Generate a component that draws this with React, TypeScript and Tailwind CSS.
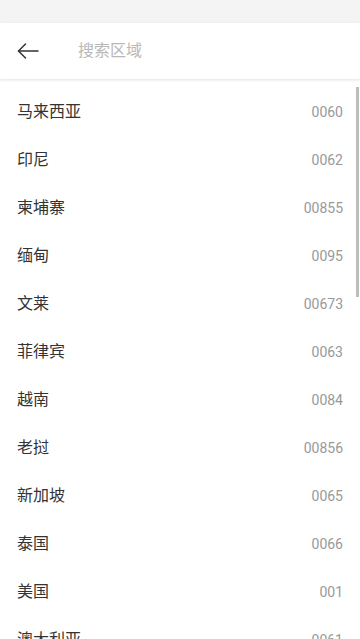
import React from 'react';

const regions = [
  { name: '马来西亚', code: '0060' },
  { name: '印尼', code: '0062' },
  { name: '柬埔寨', code: '00855' },
  { name: '缅甸', code: '0095' },
  { name: '文莱', code: '00673' },
  { name: '菲律宾', code: '0063' },
  { name: '越南', code: '0084' },
  { name: '老挝', code: '00856' },
  { name: '新加坡', code: '0065' },
  { name: '泰国', code: '0066' },
  { name: '美国', code: '001' },
  { name: '澳大利亚', code: '0061' },
];

export default function App() {
  return (
    <div
      className="relative w-[360px] h-[639px] overflow-hidden bg-white"
      style={{ fontFamily: 'Roboto, "Noto Sans CJK SC", sans-serif' }}
    >
      <div className="h-[23px] bg-[#f4f4f4]" />
      <header className="relative z-10 flex items-center h-[56px] bg-white shadow-[0_1px_3px_rgba(0,0,0,0.12)]">
        <button className="w-[56px] h-full flex items-center justify-center">
          <svg width="24" height="24" viewBox="0 0 24 24" fill="none" stroke="#333" strokeWidth="1.5" strokeLinecap="round" strokeLinejoin="round">
            <path d="M22 12H2.5" />
            <path d="M9.5 5L2.5 12L9.5 19" />
          </svg>
        </button>
        <span className="ml-[22px] text-[16px] text-[#b8b8b8]">搜索区域</span>
      </header>
      <ul className="pt-[9px]">
        {regions.map((r) => (
          <li key={r.name} className="flex items-center justify-between h-[48px] pl-[17px] pr-[17px]">
            <span className="text-[16px] text-[#333]">{r.name}</span>
            <span className="text-[14px] text-[#999]">{r.code}</span>
          </li>
        ))}
      </ul>
      <div className="absolute right-[1px] top-[87px] w-[3px] h-[210px] bg-[#bdbdbd]" />
    </div>
  );
}
